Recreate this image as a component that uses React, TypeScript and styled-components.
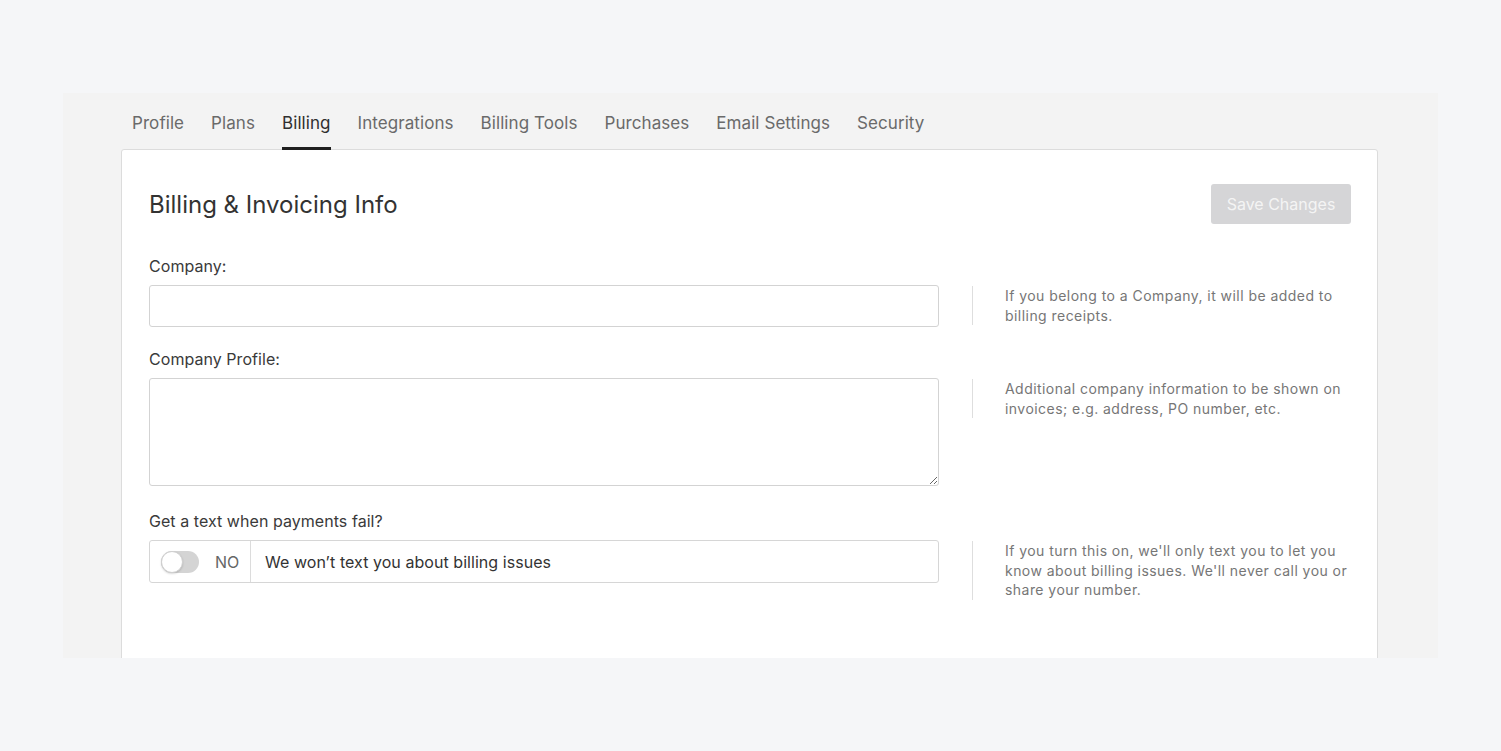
import React from "react";
import styled, { createGlobalStyle } from "styled-components";

const GlobalStyle = createGlobalStyle`
  html, body {
    margin: 0;
    padding: 0;
    background: #f5f6f8;
    font-family: Inter, "Noto Sans", sans-serif;
  }
  * {
    box-sizing: border-box;
  }
`;

const Page = styled.div`
  width: 100%;
  height: 751px;
  padding-top: 93px;
`;

const Panel = styled.div`
  width: 1375px;
  height: 565px;
  margin: 0 auto;
  padding: 0 60px 0 58px;
  background: #f3f3f3;
  overflow: hidden;
`;

const Tabs = styled.nav`
  display: flex;
  gap: 27px;
  padding: 0 11px;
  height: 57px;
  align-items: flex-end;
  position: relative;
  z-index: 1;
  margin-bottom: -1px;
`;

const Tab = styled.div<{ $active?: boolean }>`
  font-size: 17px;
  line-height: 24px;
  letter-spacing: 0.07px;
  color: ${(p) => (p.$active ? "#2f2f2f" : "#6a6a6a")};
  padding-bottom: 12px;
  border-bottom: 3px solid ${(p) => (p.$active ? "#1f1f1f" : "transparent")};
  cursor: pointer;
`;

const Card = styled.div`
  background: #fff;
  border: 1px solid #dcdcdc;
  border-radius: 3px;
  padding: 34px 26px 120px 27px;
`;

const Header = styled.div`
  display: flex;
  align-items: center;
  justify-content: space-between;
  height: 40px;
  margin-bottom: 32px;
`;

const Title = styled.h2`
  margin: 2px 0 0;
  font-size: 24px;
  font-weight: 400;
  color: #333;
  line-height: 30px;
`;

const SaveButton = styled.button`
  width: 140px;
  height: 40px;
  border: none;
  border-radius: 3px;
  background: #d5d5d7;
  color: #f4f4f4;
  font-family: inherit;
  font-size: 16px;
`;

const FieldRow = styled.div<{ $gap?: number }>`
  display: grid;
  grid-template-columns: 790px 1fr;
  column-gap: 33px;
  margin-bottom: ${(p) => p.$gap ?? 0}px;
`;

const Label = styled.label`
  grid-column: 1;
  font-size: 16px;
  line-height: 20px;
  letter-spacing: 0.05px;
  color: #3a3a3a;
  margin-bottom: 9px;
`;

const Field = styled.div`
  grid-column: 1;
  grid-row: 2;
`;

const Help = styled.p`
  grid-column: 2;
  grid-row: 2;
  align-self: start;
  margin: 1px 0 0;
  padding: 0 0 0 32px;
  border-left: 1px solid #dedede;
  font-size: 14px;
  line-height: 19.5px;
  letter-spacing: 0.45px;
  color: #767676;
`;

const TextInput = styled.input`
  display: block;
  width: 100%;
  height: 42px;
  border: 1px solid #d3d3d3;
  border-radius: 3px;
  padding: 0 14px;
  font-family: inherit;
  font-size: 16px;
  outline: none;
`;

const TextArea = styled.textarea`
  display: block;
  width: 100%;
  height: 108px;
  border: 1px solid #d3d3d3;
  border-radius: 3px;
  padding: 10px 14px;
  font-family: inherit;
  font-size: 16px;
  outline: none;
`;

const ToggleGroup = styled.div`
  display: flex;
  height: 43px;
  border: 1px solid #d6d6d6;
  border-radius: 3px;
`;

const ToggleCell = styled.div`
  display: flex;
  align-items: center;
  width: 101px;
  padding-left: 11px;
  border-right: 1px solid #dcdcdc;
`;

const Track = styled.div`
  position: relative;
  width: 38px;
  height: 22px;
  border-radius: 11px;
  background: #d4d4d4;
`;

const Knob = styled.div`
  position: absolute;
  left: 0;
  top: 0;
  width: 22px;
  height: 22px;
  border-radius: 50%;
  background: #fff;
  border: 1px solid #d0d0d0;
  box-shadow: 0 1px 2px rgba(0, 0, 0, 0.15);
`;

const ToggleState = styled.span`
  margin-left: 16px;
  font-size: 16px;
  color: #666;
`;

const ToggleText = styled.div`
  display: flex;
  align-items: center;
  padding-left: 14px;
  font-size: 16px;
  letter-spacing: 0.05px;
  color: #333;
`;

const App = () => {
  const tabs = ["Profile", "Plans", "Billing", "Integrations", "Billing Tools", "Purchases", "Email Settings", "Security"];

  return (
    <>
      <GlobalStyle />
      <Page>
        <Panel>
          <Tabs>
            {tabs.map((t) => (
              <Tab key={t} $active={t === "Billing"}>
                {t}
              </Tab>
            ))}
          </Tabs>
          <Card>
            <Header>
              <Title>Billing &amp; Invoicing Info</Title>
              <SaveButton disabled>Save Changes</SaveButton>
            </Header>

            <FieldRow $gap={22}>
              <Label>Company:</Label>
              <Field>
                <TextInput type="text" />
              </Field>
              <Help>If you belong to a Company, it will be added to billing receipts.</Help>
            </FieldRow>

            <FieldRow $gap={25}>
              <Label>Company Profile:</Label>
              <Field>
                <TextArea />
              </Field>
              <Help>Additional company information to be shown on invoices; e.g. address, PO number, etc.</Help>
            </FieldRow>

            <FieldRow>
              <Label>Get a text when payments fail?</Label>
              <Field>
                <ToggleGroup>
                  <ToggleCell>
                    <Track>
                      <Knob />
                    </Track>
                    <ToggleState>NO</ToggleState>
                  </ToggleCell>
                  <ToggleText>We won’t text you about billing issues</ToggleText>
                </ToggleGroup>
              </Field>
              <Help>
                If you turn this on, we'll only text you to let you know about billing issues. We'll never call you or
                share your number.
              </Help>
            </FieldRow>
          </Card>
        </Panel>
      </Page>
    </>
  );
};

export default App;
